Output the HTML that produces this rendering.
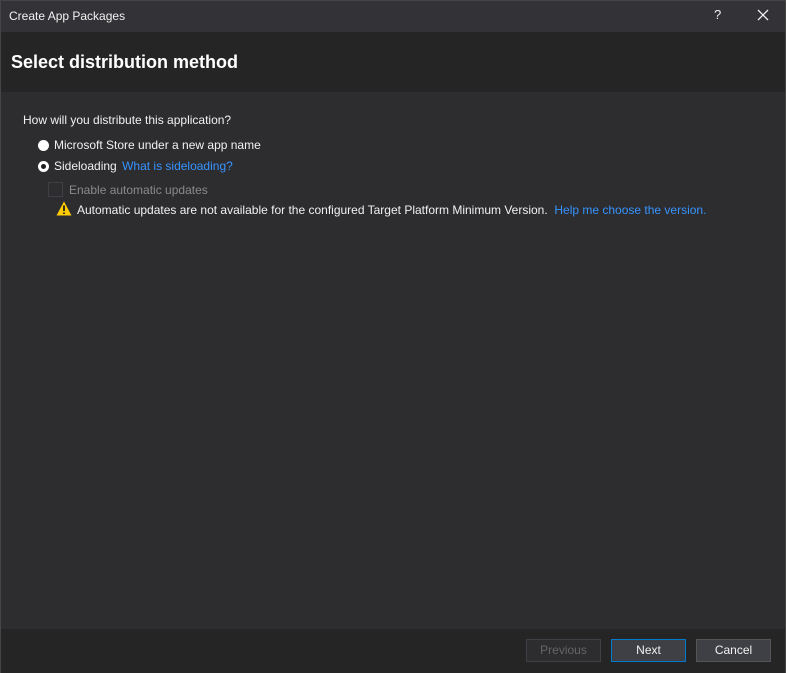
<!DOCTYPE html>
<html><head><meta charset="utf-8"><style>
*{margin:0;padding:0;box-sizing:border-box}
body{width:786px;height:673px;background:#2d2d30;font-family:"Segoe UI","Liberation Sans",sans-serif;color:#f1f1f1;font-size:12px;position:relative;overflow:hidden}
.win{position:absolute;left:0;top:0;width:786px;height:673px;border:1px solid #454545}
.tb{position:absolute;left:0;top:0;width:784px;height:31px;background:#333337}
.tb .t{position:absolute;left:8px;top:8px;font-size:12px;color:#f1f1f1}
.tb .q{position:absolute;left:713px;top:6px;font-size:13px}
.tb .x{position:absolute;left:756px;top:8px}
.hd{position:absolute;left:0;top:31px;width:784px;height:60px;background:#252526}
.hd h1{position:absolute;left:10px;top:20px;font-size:18px;font-weight:bold;color:#fff}
.tx{position:absolute;font-size:12px;white-space:nowrap}
.a{color:#3794ff}
.rad{position:absolute;width:11px;height:11px;border-radius:50%;background:#fff}
.rad.s::after{content:"";position:absolute;left:3px;top:3px;width:5px;height:5px;border-radius:50%;background:#1e1e1e}
.cb{position:absolute;left:47px;top:181px;width:15px;height:15px;border:1px solid #3f3f46;background:#2d2d30}
.ft{position:absolute;left:0;top:628px;width:784px;height:44px;background:#252526}
.btn{position:absolute;top:10px;height:23px;width:75px;border:1px solid #555;background:#3f3f46;text-align:center;line-height:21px;font-size:12px}
</style></head><body>
<div class="win">
<div class="tb"><span class="t">Create App Packages</span><span class="q">?</span>
<svg class="x" width="12" height="12" viewBox="0 0 12 12"><path d="M1 1L11 11M11 1L1 11" stroke="#f1f1f1" stroke-width="1.3"/></svg></div>
<div class="hd"><h1>Select distribution method</h1></div>
<div class="tx" style="left:22px;top:112px">How will you distribute this application?</div>
<div class="rad" style="left:37px;top:139px"></div>
<div class="tx" style="left:53px;top:137px">Microsoft Store under a new app name</div>
<div class="rad s" style="left:37px;top:160px"></div>
<div class="tx" style="left:53px;top:158px">Sideloading <span class="a" style="margin-left:2px">What is sideloading?</span></div>
<div class="cb"></div>
<div class="tx" style="left:68px;top:182px;color:#8a8a8a">Enable automatic updates</div>
<svg style="position:absolute;left:55px;top:200px" width="16" height="15" viewBox="0 0 16 15"><path d="M8 0.5L15.5 14.5H0.5Z" fill="#fc0"/><path d="M8 4.5V10M8 11.5V13" stroke="#1e1e1e" stroke-width="1.8"/></svg>
<div class="tx" style="left:76px;top:202px">Automatic updates are not available for the configured Target Platform Minimum Version.&nbsp; <span class="a">Help me choose the version.</span></div>
<div class="ft">
<div class="btn" style="left:525px;background:#2d2d30;border-color:#3f3f46;color:#656565">Previous</div>
<div class="btn" style="left:610px;border-color:#007acc">Next</div>
<div class="btn" style="left:695px">Cancel</div>
</div>
</div>
</body></html>
